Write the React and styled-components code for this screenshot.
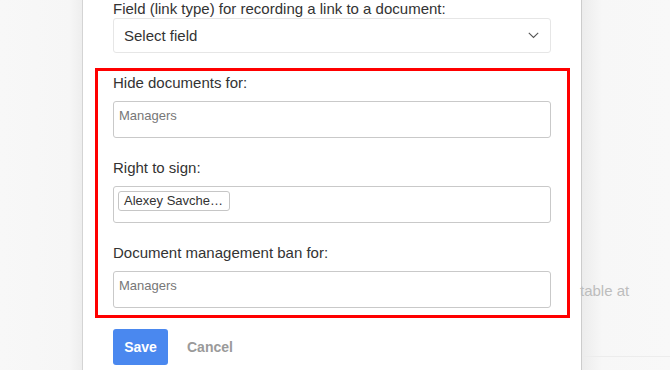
import React from 'react';
import styled, { createGlobalStyle } from 'styled-components';

const GlobalStyle = createGlobalStyle`
  * {
    box-sizing: border-box;
  }
  body {
    margin: 0;
    background: #f7f7f7;
    font-family: "Liberation Sans", Arial, sans-serif;
    overflow: hidden;
  }
`;

const fields = [
  { label: 'Hide documents for:', placeholder: 'Managers' },
  { label: 'Right to sign:', chips: ['Alexey Savche…'] },
  { label: 'Document management ban for:', placeholder: 'Managers' },
];

function Chevron() {
  return (
    <svg width="11" height="7" viewBox="0 0 11 7">
      <path d="M0.8 0.8 L5.5 5.5 L10.2 0.8" fill="none" stroke="#555" strokeWidth="1.1" />
    </svg>
  );
}

function App() {
  return (
    <Page>
      <GlobalStyle />
      <LeftPanel />

      <Modal>
        <Label $compact>Field (link type) for recording a link to a document:</Label>
        <Select>
          <span>Select field</span>
          <Chevron />
        </Select>

        <Highlight>
          {fields.map((field) => (
            <FieldGroup key={field.label}>
              <Label>{field.label}</Label>
              <MultiSelect>
                {field.chips ? (
                  field.chips.map((chip) => <Chip key={chip}>{chip}</Chip>)
                ) : (
                  <Placeholder>{field.placeholder}</Placeholder>
                )}
              </MultiSelect>
            </FieldGroup>
          ))}
        </Highlight>

        <Actions>
          <SaveButton type="button">Save</SaveButton>
          <CancelButton type="button">Cancel</CancelButton>
        </Actions>
      </Modal>

      <RightPanel>
        <BackText>table at</BackText>
        <Divider />
      </RightPanel>
    </Page>
  );
}

export default App;

const Page = styled.div`
  display: grid;
  grid-template-columns: 83px 498px 1fr;
  height: 370px;
  overflow: hidden;
`;

const LeftPanel = styled.div`
  background: linear-gradient(to right, #f8f8f8 0%, #f6f6f6 85%, #eeeeee 100%);
  border-right: 1px solid #d4d4d4;
`;

const Modal = styled.div`
  background: #fff;
  padding: 0 30px;
`;

const Label = styled.div`
  font-size: 15px;
  line-height: ${(p) => (p.$compact ? '18px' : '20px')};
  color: #333;
  margin-bottom: ${(p) => (p.$compact ? '0' : '8px')};
`;

const Select = styled.div`
  display: flex;
  align-items: center;
  justify-content: space-between;
  height: 35px;
  padding: 0 11px 0 10px;
  border: 1px solid #e6e6e6;
  border-radius: 3px;
  font-size: 15px;
  color: #333;
`;

const Highlight = styled.div`
  margin: 15px -19px 0 -18px;
  padding: 2px 16px 7px 15px;
  border: 3px solid #ff0000;
`;

const FieldGroup = styled.div`
  & + & {
    margin-top: 20px;
  }
`;

const MultiSelect = styled.div`
  display: flex;
  align-items: flex-start;
  gap: 4px;
  height: 37px;
  padding: 4px;
  border: 1px solid #c9c9c9;
  border-radius: 3px;
`;

const Placeholder = styled.span`
  margin: 2px 0 0 1px;
  font-size: 13px;
  line-height: 16px;
  color: #777;
`;

const Chip = styled.span`
  height: 20px;
  padding: 0 6px 0 5px;
  border: 1px solid #c6c6c6;
  border-radius: 3px;
  font-size: 13px;
  line-height: 18px;
  color: #333;
  white-space: nowrap;
`;

const Actions = styled.div`
  display: flex;
  align-items: center;
  gap: 19px;
  margin-top: 11px;
`;

const SaveButton = styled.button`
  width: 55px;
  height: 36px;
  padding: 0;
  border: none;
  border-radius: 3px;
  background: #4a88ef;
  color: #fff;
  font-family: inherit;
  font-size: 14px;
  font-weight: bold;
`;

const CancelButton = styled.button`
  padding: 0;
  border: none;
  background: none;
  color: #9a9a9a;
  font-family: inherit;
  font-size: 14px;
  font-weight: bold;
`;

const RightPanel = styled.div`
  display: flex;
  flex-direction: column;
  padding-top: 281px;
  border-left: 1px solid #cccccc;
  background: linear-gradient(to right, #ececec 0px, #f7f7f7 20px, #f8f8f8 100%);
`;

const BackText = styled.div`
  margin-left: -2px;
  font-size: 15px;
  line-height: 20px;
  color: #bdbdbd;
  white-space: nowrap;
`;

const Divider = styled.div`
  margin-top: 55px;
  height: 1px;
  background: #ececec;
`;
